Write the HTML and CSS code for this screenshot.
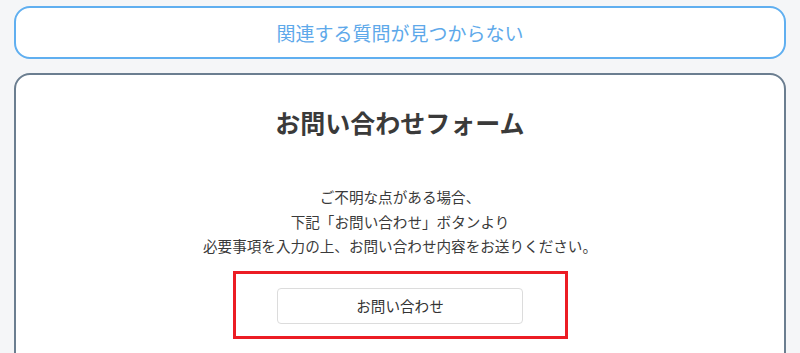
FILE: index.html
```html
<!DOCTYPE html>
<html lang="ja">
<head>
<meta charset="utf-8">
<link rel="stylesheet" href="styles.css">
</head>
<body>
<div class="page">
  <button class="notfound">関連する質問が見つからない</button>
  <section class="card">
    <h2 class="title">お問い合わせフォーム</h2>
    <p class="desc">ご不明な点がある場合、<br>下記「お問い合わせ」ボタンより<br>必要事項を入力の上、お問い合わせ内容をお送りください。</p>
    <div class="highlight">
      <button class="contact">お問い合わせ</button>
    </div>
  </section>
</div>
</body>
</html>
```
FILE: styles.css
```css
html, body {
  margin: 0;
  padding: 0;
  background: #f5f6f8;
  font-family: "Noto Sans CJK JP", "Noto Sans", sans-serif;
  color: #333;
}
.page {
  padding: 6px 14px 0;
  display: flex;
  flex-direction: column;
  gap: 14px;
  height: 353px;
  box-sizing: border-box;
  overflow: hidden;
}
.notfound {
  flex: none;
  height: 53px;
  box-sizing: border-box;
  border: 2px solid #60aff0;
  border-radius: 16px;
  background: #fff;
  color: #5ea9ea;
  font-family: inherit;
  font-size: 19px;
  padding: 0;
}
.card {
  flex: none;
  background: #fff;
  border: 2px solid #6b7e90;
  border-radius: 16px;
  height: 330px;
  box-sizing: border-box;
  display: flex;
  flex-direction: column;
  align-items: center;
  padding-top: 28px;
}
.title {
  margin: 0;
  font-size: 25px;
  line-height: 38px;
  font-weight: bold;
  color: #3a3a3a;
}
.desc {
  margin: 44px 0 0;
  font-size: 14.6px;
  line-height: 24.5px;
  text-align: center;
  color: #3a3a3a;
}
.highlight {
  margin-top: 12px;
  width: 335px;
  height: 68px;
  box-sizing: border-box;
  border: 3px solid #ec1c24;
  display: flex;
  align-items: center;
  justify-content: center;
}
.contact {
  width: 246px;
  height: 36px;
  margin-top: 2px;
  box-sizing: border-box;
  border: 1px solid #dcdcdc;
  border-radius: 4px;
  background: #fff;
  color: #333;
  font-family: inherit;
  font-size: 14.6px;
  padding: 0;
}
```
